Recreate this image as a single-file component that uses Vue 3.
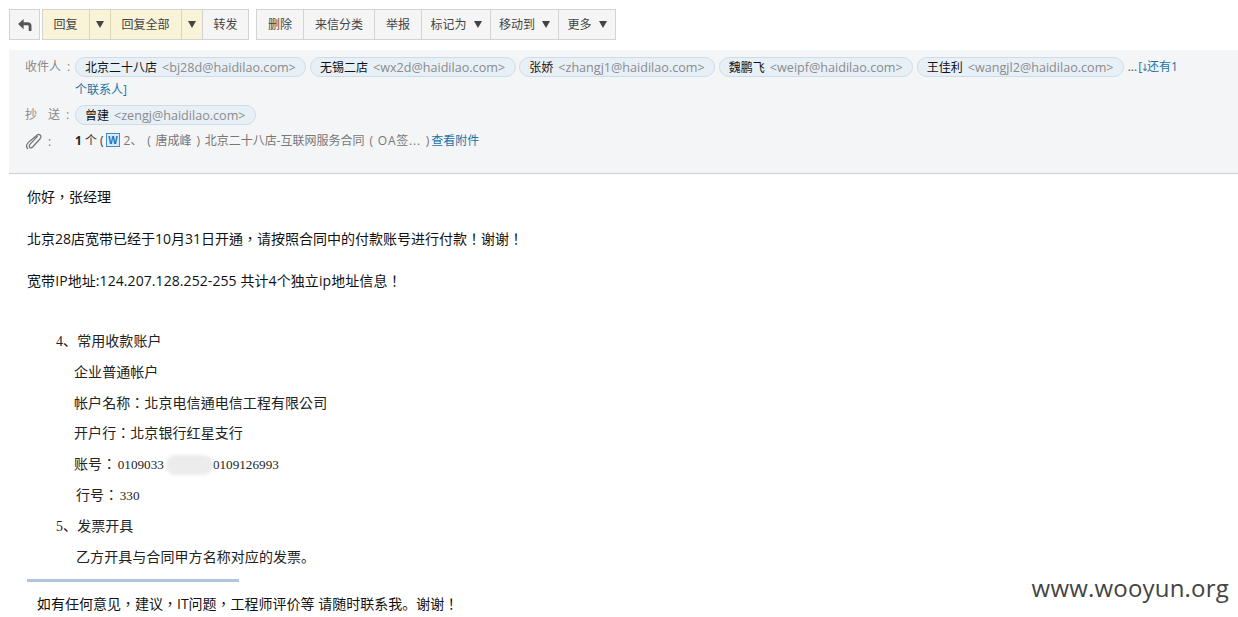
<script setup>
const toRow = [
  { n: '北京二十八店', m: '<bj28d@haidilao.com>' },
  { n: '无锡二店', m: '<wx2d@haidilao.com>' },
  { n: '张娇', m: '<zhangj1@haidilao.com>' },
  { n: '魏鹏飞', m: '<weipf@haidilao.com>' },
  { n: '王佳利', m: '<wangjl2@haidilao.com>' },
]
const groupA = [
  { t: '回复', w: 46, y: 1 },
  { t: '', w: 21, y: 1, a: 1 },
  { t: '回复全部', w: 71, y: 1 },
  { t: '', w: 21, y: 1, a: 1 },
  { t: '转发', w: 46 },
]
const groupB = [
  { t: '删除', w: 46 },
  { t: '来信分类', w: 71 },
  { t: '举报', w: 47 },
  { t: '标记为', w: 69, a: 1 },
  { t: '移动到', w: 68, a: 1 },
  { t: '更多', w: 57, a: 1 },
]
</script>

<template>
  <div class="page">
    <div class="toolbar">
      <div class="group back">
        <svg width="14" height="12" viewBox="0 0 15 13"><path d="M0 5.5 6 0v3.4h4.6c2.4 0 3.9 1.5 3.9 3.8V13h-3V8c0-.8-.4-1.2-1.2-1.2H6V11z" fill="#555"/></svg>
      </div>
      <div class="group">
        <div v-for="(b, i) in groupA" :key="i" class="btn" :class="{ yellow: b.y }" :style="{ width: b.w + 'px' }">
          <span v-if="b.t">{{ b.t }}</span><i v-if="b.a" class="tri"></i>
        </div>
      </div>
      <div class="group second">
        <div v-for="(b, i) in groupB" :key="i" class="btn" :style="{ width: b.w + 'px' }">
          <span v-if="b.t">{{ b.t }}</span><i v-if="b.a" class="tri gap"></i>
        </div>
      </div>
    </div>

    <div class="head">
      <div class="row to">
        <span class="label"><span>收件人</span><span class="col">:</span></span>
        <div class="chips">
          <span v-for="c in toRow" :key="c.m" class="chip"><span class="nm">{{ c.n }}</span><span class="em">{{ c.m }}</span></span><span class="dots">...</span><a class="more">[<span class="arr">↓</span>还有1个联系人]</a>
        </div>
      </div>
      <div class="row cc">
        <span class="label"><span class="sp">抄</span><span>送</span><span class="col">:</span></span>
        <div class="chips"><span class="chip"><span class="nm">曾建</span><span class="em">&lt;zengj@haidilao.com&gt;</span></span></div>
      </div>
      <div class="row att">
        <span class="label clip">
          <svg width="18" height="18" viewBox="0 0 18 18" fill="none" stroke="#777" stroke-width="1.3" stroke-linecap="round"><path d="M12.2 3.6 5 11.4c-1 1.1-.9 2.4-.1 3 .9.7 2 .4 3-.6l7-7.8c1.4-1.6 1.3-3.2.2-4-1.2-.9-2.7-.5-4.1 1L3.2 9.6c-2 2.2-2 4.5-.6 5.9"/></svg>
          <span class="colon">:</span>
        </span>
        <div class="attline">
          <strong>1</strong><span class="ge">个 (</span>
          <svg class="word" width="14" height="14" viewBox="0 0 14 14"><rect x=".5" y=".5" width="13" height="13" fill="#d8eaf8" stroke="#3f8fce"/><text x="7" y="11" text-anchor="middle" font-size="10" font-weight="700" font-family="Liberation Sans, sans-serif" fill="#1f6fb5">W</text></svg>
          <span class="fname">2、 ( 唐成峰 ) 北京二十八店-互联网服务合同 ( <span class="oa">OA签...</span> )</span>
          <a class="link">查看附件</a>
        </div>
      </div>
    </div>

    <div class="body">
      <p>你好，张经理</p>
      <p>北京28店宽带已经于10月31日开通，请按照合同中的付款账号进行付款！谢谢！</p>
      <p class="ip">宽带IP地址:124.207.128.252-255 共计4个独立ip地址信息！</p>
      <div class="doc">
        <div class="l1">4、常用收款账户</div>
        <div class="l2">企业普通帐户</div>
        <div class="l2 tc">帐户名称：北京电信通电信工程有限公司</div>
        <div class="l2 tc">开户行：北京银行红星支行</div>
        <div class="l2 tc acct">账号：<span class="num first">0109033</span><span class="hole"></span><span class="num">0109126993</span><span class="blur"></span></div>
        <div class="l2 n3 tc">行号：<span class="num first">330</span></div>
        <div class="l1">5、发票开具</div>
        <div class="l2 n3">乙方开具与合同甲方名称对应的发票。</div>
      </div>
      <div class="rule"></div>
      <p class="sign">如有任何意见，建议，IT问题，工程师评价等 请随时联系我<span class="sc">。</span>谢谢！</p>
    </div>
    <div class="mark">www.wooyun.org</div>
  </div>
</template>

<style>
html, body { margin: 0; background: #fff; overflow: hidden; }
</style>

<style scoped>
.page {
  position: relative;
  width: 1238px;
  height: 617px;
  overflow: hidden;
  background: #fff;
  font-family: "Open Sans", "Noto Sans CJK SC", sans-serif;
  font-size: 12px;
  box-sizing: border-box;
  padding-top: 9px;
}
.toolbar { display: flex; height: 31px; margin-left: 9px; }
.group { display: flex; border: 1px solid #d3d3d3; background: #f5f5f5; box-sizing: border-box; height: 31px; margin-left: 2px; }
.back { width: 31px; margin-left: 0; align-items: center; justify-content: center; }
.second { margin-left: 7px; }
.btn {
  display: flex; align-items: center; justify-content: center;
  color: #444; border-left: 1px solid #d3d3d3; box-sizing: border-box; height: 29px; padding-bottom: 1px;
}
.btn:first-child { border-left: 0; }
.yellow { background: #f9f3d8; border-left-color: #ddd6b4; padding-right: 1px; }
.tri { width: 0; height: 0; border-left: 4px solid transparent; border-right: 4px solid transparent; border-top: 7px solid #444; }
.tri.gap { margin-left: 7px; }

.head {
  margin: 10px 0 0 9px;
  height: 124px;
  background: #f4f5f6;
  border-bottom: 1px solid #cfcfcf;
  box-sizing: border-box;
  padding-top: 6px;
}
.row { display: flex; }
.label { display: flex; width: 66px; flex: none; box-sizing: border-box; padding-left: 16px; color: #888; font-size: 12px; line-height: 22px; white-space: nowrap; }
.sp { margin-right: 11px; }
.col { margin-left: 6px; }
.chips { width: 1106px; line-height: 22px; font-size: 12px; }
.chip {
  display: inline-flex; align-items: center; height: 20px; box-sizing: border-box; margin: 1px 3.6px 0 0; padding: 1px 9.6px 0 9px;
  border: 1px solid #cfdce8; border-radius: 10px; background: #e8f0f7; vertical-align: top;
  font-size: 12px; white-space: nowrap;
}
.nm { color: #111; margin-right: 5px; line-height: 16px; }
.em { color: #8b8b8b; font-size: 12.6px; line-height: 16px; }
.dots { color: #555; margin-right: 1px; }
.arr { font-family: "DejaVu Sans", sans-serif; font-size: 10px; margin: 0 -2px 0 -1.5px; }
.more, .link { color: #1a74a8; }
.to { height: 39px; }
.cc { margin-top: 9px; height: 26px; }
.att { height: 24px; }
.clip { display: flex; align-items: center; padding-left: 16px; }
.colon { margin-left: 5px; color: #777; }
.attline { display: flex; align-items: center; height: 20px; color: #222; white-space: pre; }
.attline strong { font-weight: 700; margin-right: 3px; }
.ge { color: #333; margin-right: 2px; }
.word { margin-right: 4px; }
.fname { color: #777; margin-right: 2px; word-spacing: 1.7px; }
.oa { letter-spacing: .8px; }

.body { padding-left: 27px; color: #111; font-size: 14px; }
p { margin: 0; }
.body > p { height: 42px; line-height: 46px; white-space: nowrap; font-family: "Open Sans", "Noto Sans CJK TC", sans-serif; }
.body > p.ip { letter-spacing: .08px; }
.sc { font-family: "Noto Sans CJK SC", sans-serif; }
.doc { margin-top: 26px; font-family: "Liberation Serif", "Noto Sans CJK SC", serif; color: #222; letter-spacing: .07px; }
.doc > div { height: 30.8px; line-height: 31px; white-space: nowrap; }
.doc > .tc { font-family: "Liberation Serif", "Noto Sans CJK TC", serif; }
.l1 { padding-left: 29px; }
.l2 { padding-left: 47px; }
.n3 { padding-left: 49px; }
.num { font-size: 13.2px; letter-spacing: 0; }
.first { margin-left: 1.5px; }
.acct { position: relative; }
.hole { display: inline-block; width: 49px; }
.blur {
  position: absolute; left: 139px; top: 6px; width: 47px; height: 20px;
  background: #ececec; border-radius: 9px; filter: blur(1.5px);
}
.rule { width: 212px; height: 3px; background: #b0c4de; margin-top: 6.6px; }
.body > p.sign { margin-left: 10px; height: 32px; line-height: 42px; }
.mark { position: absolute; right: 9px; top: 572px; font-size: 24px; line-height: 32px; color: #444; letter-spacing: .2px; }
</style>
